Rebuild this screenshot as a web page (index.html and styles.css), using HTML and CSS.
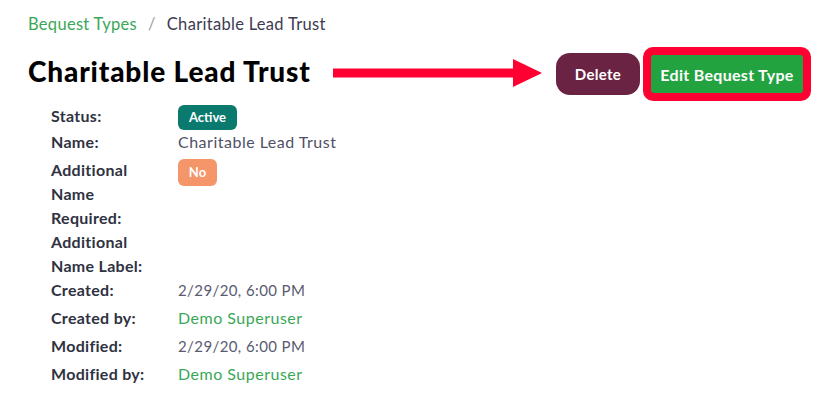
FILE: index.html
```html
<!DOCTYPE html>
<html lang="en">
<head>
<meta charset="utf-8">
<title>Charitable Lead Trust</title>
<link rel="stylesheet" href="styles.css">
</head>
<body>
<div class="page">
  <nav class="crumbs">
    <a class="crumb-link" href="#">Bequest Types</a>
    <span class="crumb-sep">/</span>
    <span class="crumb-current">Charitable Lead Trust</span>
  </nav>
  <header class="head">
    <h1 class="title">Charitable Lead Trust</h1>
    <svg class="arrow" width="209" height="28" viewBox="0 0 209 28" aria-hidden="true">
      <rect x="0" y="9.5" width="182" height="9" fill="#ff0033"/>
      <polygon points="180,0 209,14 180,28" fill="#ff0033"/>
    </svg>
    <div class="actions">
      <button class="btn btn-delete">Delete</button>
      <div class="highlight">
        <button class="btn btn-edit">Edit Bequest Type</button>
      </div>
    </div>
  </header>
  <dl class="details">
    <div class="row"><dt>Status:</dt><dd><span class="badge badge-active">Active</span></dd></div>
    <div class="row gap"><dt>Name:</dt><dd class="val">Charitable Lead Trust</dd></div>
    <div class="row"><dt>Additional<br>Name<br>Required:</dt><dd><span class="badge badge-no">No</span></dd></div>
    <div class="row"><dt>Additional<br>Name Label:</dt><dd></dd></div>
    <div class="row gap"><dt>Created:</dt><dd class="val date">2/29/20, 6:00 PM</dd></div>
    <div class="row gap"><dt>Created by:</dt><dd class="val"><a class="user" href="#">Demo Superuser</a></dd></div>
    <div class="row gap"><dt>Modified:</dt><dd class="val date">2/29/20, 6:00 PM</dd></div>
    <div class="row"><dt>Modified by:</dt><dd class="val"><a class="user" href="#">Demo Superuser</a></dd></div>
  </dl>
</div>
</body>
</html>
```

FILE: styles.css
```css
* { box-sizing: border-box; }
body {
  margin: 0;
  background: #fff;
  font-family: "Lato", "Open Sans", sans-serif;
  color: #343a40;
}
.page {
  padding: 12px 13px 0 28px;
}
.crumbs {
  display: flex;
  align-items: center;
  font-size: 16.5px;
  line-height: 24px;
  height: 24px;
  letter-spacing: 0.3px;
}
.crumb-link {
  color: #3aa757;
  text-decoration: none;
}
.crumb-sep {
  color: #9aa0a6;
  margin: 0 11px 0 11px;
}
.crumb-current {
  color: #3d3b52;
}
.head {
  display: flex;
  align-items: center;
  margin-top: 11px;
  height: 54px;
}
.title {
  margin: 0 0 7px 0;
  font-size: 28px;
  font-weight: 900;
  color: #000;
  letter-spacing: 0.85px;
  line-height: 32px;
}
.arrow {
  margin-left: 22px;
  margin-bottom: 2px;
  flex: none;
}
.actions {
  margin-left: auto;
  display: flex;
  align-items: center;
  gap: 3px;
}
.btn {
  border: none;
  font-family: inherit;
  font-weight: 700;
  font-size: 15px;
  color: #fff;
  cursor: pointer;
  padding: 0;
}
.btn-delete {
  width: 84px;
  height: 42px;
  border-radius: 14px;
  background: #6a2343;
  letter-spacing: 0.3px;
}
.highlight {
  padding: 8px;
  background: #ff0033;
  border-radius: 10px;
}
.btn-edit {
  display: block;
  width: 152px;
  height: 38px;
  border-radius: 3px;
  background: #22a33f;
  font-size: 16px;
  letter-spacing: 0.3px;
}
.details {
  margin: 3px 0 0 23px;
  padding: 0;
}
.row {
  display: flex;
  line-height: 24px;
}
.row.gap { margin-bottom: 4px; }
dt {
  width: 127px;
  flex: none;
  font-weight: 700;
  font-size: 16px;
  letter-spacing: 0.3px;
  color: #2f3241;
}
dd {
  margin: 0;
  font-size: 16px;
  letter-spacing: 0.5px;
}
.val { color: #4f5068; }
.date { font-size: 15px; letter-spacing: 0.4px; color: #5a5b70; }
.user {
  color: #3aa757;
  text-decoration: none;
}
.badge {
  display: inline-flex;
  align-items: center;
  justify-content: center;
  color: #fff;
  font-size: 13px;
  font-weight: 700;
  border-radius: 6px;
  letter-spacing: 0;
}
.badge-active {
  width: 59px;
  height: 25px;
  background: #0a7a6e;
}
.badge-no {
  width: 39px;
  height: 27px;
  margin-top: 1px;
  background: #f4956a;
}
```
